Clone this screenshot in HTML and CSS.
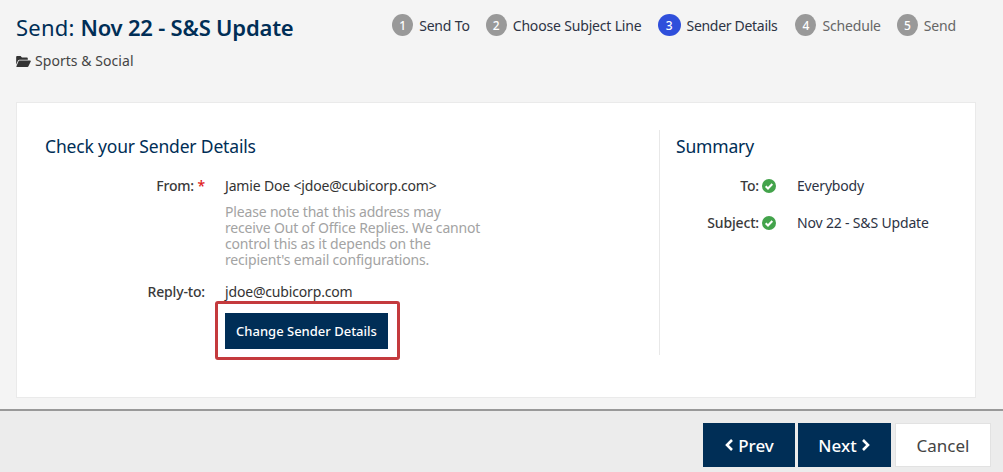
FILE: index.html
```html
<!DOCTYPE html>
<html lang="en">
<head>
<meta charset="utf-8">
<title>Send: Nov 22 - S&amp;S Update</title>
<link rel="stylesheet" href="styles.css">
</head>
<body>
<header class="top">
  <div class="heading">
    <h1 class="title">Send: <strong>Nov 22 - S&amp;S Update</strong></h1>
    <div class="folder">
      <svg class="folder-icon" viewBox="0 0 16 12"><path d="M0 1.2C0 .5.5 0 1.2 0h3.6l1.500 1.500h5.200c.7 0 1.200.5 1.200 1.200V4H3.600C2.900 4 2.300 4.400 2 5L0 9.500z"/><path d="M3.400 5h11.800c.6 0 1 .6.7 1.100l-2.500 5.200c-.2.4-.6.7-1.100.7H.9c-.5 0-.8-.5-.6-.9l2.300-5.500c.1-.4.4-.6.800-.6z"/></svg>
      <span>Sports &amp; Social</span>
    </div>
  </div>
  <ol class="steps">
    <li class="step"><span class="num">1</span>Send To</li>
    <li class="step"><span class="num">2</span>Choose Subject Line</li>
    <li class="step active"><span class="num current">3</span>Sender Details</li>
    <li class="step later"><span class="num">4</span>Schedule</li>
    <li class="step later"><span class="num">5</span>Send</li>
  </ol>
</header>

<main class="card">
  <section class="details">
    <h2 class="section-title">Check your Sender Details</h2>
    <div class="row from-row">
      <div class="label">From: <span class="req">*</span></div>
      <div class="value">Jamie Doe &lt;jdoe@cubicorp.com&gt;
        <p class="note">Please note that this address may receive Out of Office Replies. We cannot control this as it depends on the recipient's email configurations.</p>
      </div>
    </div>
    <div class="row">
      <div class="label">Reply-to:</div>
      <div class="value">jdoe@cubicorp.com
        <div class="highlight"><button class="btn change">Change Sender Details</button></div>
      </div>
    </div>
  </section>
  <aside class="summary">
    <h2 class="section-title">Summary</h2>
    <div class="sum-row">
      <div class="sum-label">To: <svg class="check" viewBox="0 0 14 14"><circle cx="7" cy="7" r="7"/><path d="M3.700 7.200l2.300 2.300 4.300-4.500"/></svg></div>
      <div class="sum-value">Everybody</div>
    </div>
    <div class="sum-row">
      <div class="sum-label">Subject: <svg class="check" viewBox="0 0 14 14"><circle cx="7" cy="7" r="7"/><path d="M3.700 7.200l2.300 2.300 4.300-4.500"/></svg></div>
      <div class="sum-value">Nov 22 - S&amp;S Update</div>
    </div>
  </aside>
</main>

<footer class="actions">
  <button class="btn nav prev"><svg class="chev" viewBox="0 0 10 14"><path d="M8 2L3 7l5 5"/></svg>Prev</button>
  <button class="btn nav next">Next<svg class="chev" viewBox="0 0 10 14"><path d="M2 2l5 5-5 5"/></svg></button>
  <button class="cancel">Cancel</button>
</footer>
</body>
</html>
```
FILE: styles.css
```css
* { box-sizing: border-box; }
html, body { height: 100%; }
body {
  margin: 0;
  background: #f4f4f4;
  color: #333;
  font-family: "Noto Sans", "Open Sans", sans-serif;
  font-size: 14px;
  letter-spacing: -0.17px;
  display: flex;
  flex-direction: column;
  overflow: hidden;
}
.top {
  display: flex;
  justify-content: space-between;
  align-items: flex-start;
  height: 102px;
  padding: 12px 47px 0 16px;
}
.title {
  margin: 0;
  font-size: 22px;
  line-height: 30px;
  font-weight: 400;
  letter-spacing: 0.2px;
  color: #002e56;
  white-space: nowrap;
}
.title strong { font-weight: 600; letter-spacing: -0.2px; }
.folder {
  display: flex;
  align-items: center;
  gap: 4px;
  margin-top: 9px;
  line-height: 20px;
  color: #444;
  font-size: 14px;
  letter-spacing: 0.05px;
}
.folder-icon { width: 15px; height: 11px; fill: #333; }
.steps {
  display: flex;
  gap: 16px;
  margin: 2px 0 0;
  padding: 0;
  list-style: none;
}
.step {
  display: flex;
  align-items: center;
  gap: 6px;
  height: 22px;
  font-size: 14px;
  color: #2d3344;
  white-space: nowrap;
}
.step.active { letter-spacing: -0.3px; margin-right: 2px; }
.step.later { color: #666; }
.num {
  display: flex;
  align-items: center;
  justify-content: center;
  width: 21px;
  height: 22px;
  border-radius: 50%;
  background: #999;
  color: #fff;
  font-size: 12px;
  font-weight: 500;
}
.num.current { background: #2f4fdb; width: 23px; }
.card {
  display: flex;
  height: 296px;
  margin: 0 27px 0 16px;
  background: #fff;
  border: 1px solid #eaeaea;
  padding-top: 27px;
}
.details {
  width: 643px;
  height: 225px;
  padding-left: 28px;
  border-right: 1px solid #e8e8e8;
}
.summary { flex: 1; padding-left: 16px; }
.section-title {
  margin: 0;
  padding-top: 3px;
  font-size: 17.5px;
  line-height: 26px;
  font-weight: 400;
  color: #002e56;
}
.row { display: flex; font-size: 14px; line-height: 16px; }
.from-row { margin-top: 19px; }
.label {
  width: 160px;
  flex: none;
  text-align: right;
  font-weight: 500;
  color: #3a3a3a;
  white-space: nowrap;
}
.req { color: #e02020; }
.value { margin-left: 20px; color: #333; white-space: nowrap; }
.note {
  margin: 10px 0 16px;
  width: 262px;
  white-space: normal;
  color: #a3a3a3;
}
.highlight {
  display: flex;
  width: 185px;
  height: 59px;
  margin: 1px 0 0 -10px;
  padding: 9px 7px;
  border: 3px solid #c43a3d;
  border-radius: 3px;
  background: #fff;
}
.btn {
  border: 0;
  background: #002e56;
  color: #fff;
  font-family: inherit;
  font-weight: 500;
}
.change {
  width: 163px;
  height: 36px;
  padding: 0;
  font-size: 13px;
  white-space: nowrap;
}
.sum-row {
  display: flex;
  line-height: 16px;
  font-size: 14px;
  margin-top: 21px;
}
.summary .sum-row:first-of-type { margin-top: 19px; }
.sum-label {
  display: flex;
  align-items: center;
  justify-content: flex-end;
  gap: 3px;
  width: 100px;
  font-weight: 500;
  color: #3a3a3a;
  white-space: nowrap;
}
.check { width: 14px; height: 14px; }
.check circle { fill: #43a34b; }
.check path { fill: none; stroke: #fff; stroke-width: 2; }
.sum-value { margin-left: 21px; color: #2d3344; white-space: nowrap; }
.actions {
  flex: 1;
  display: flex;
  justify-content: flex-end;
  gap: 3px;
  margin-top: 11px;
  padding: 12px 12px 0 0;
  background: #ececec;
  border-top: 2px solid #999;
}
.nav {
  display: flex;
  align-items: center;
  justify-content: center;
  gap: 4px;
  width: 92px;
  height: 44px;
  padding: 0;
  font-size: 17px;
  letter-spacing: 0;
}
.next { width: 93px; }
.chev { width: 10px; height: 14px; fill: none; stroke: #fff; stroke-width: 2.600; }
.cancel {
  width: 96px;
  height: 44px;
  margin-left: 1px;
  background: #fff;
  border: 1px solid #e2e2e2;
  color: #444;
  font-family: inherit;
  font-size: 17px;
  letter-spacing: 0;
  padding: 0;
}
```
